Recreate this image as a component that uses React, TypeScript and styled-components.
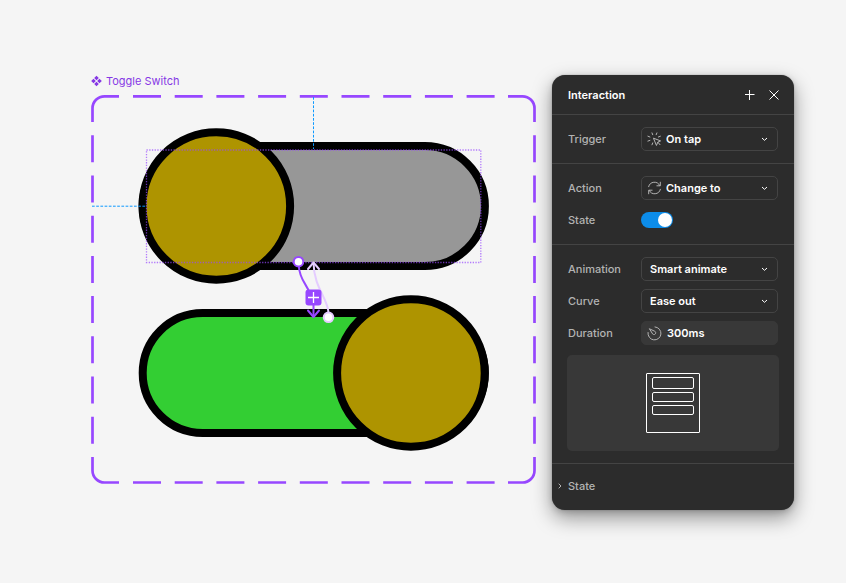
import React, { useState } from "react";
import styled, { createGlobalStyle } from "styled-components";

const PURPLE = "#9747ff";
const GUIDE = "#0d99ff";
const GOLD = "#ae9400";

const GlobalStyle = createGlobalStyle`
  *, *::before, *::after { box-sizing: border-box; }
  body {
    margin: 0;
    background: #f5f5f5;
    font-family: Inter, "Liberation Sans", sans-serif;
    font-size: 11px;
    line-height: 16px;
  }
  button, input, select { font: inherit; color: inherit; }
`;

const Page = styled.main`
  min-height: 100vh;
  display: flex;
  align-items: flex-start;
  justify-content: center;
  gap: 16px;
  padding: 73px 52px 73px 91px;
`;

const ComponentSet = styled.section`
  flex: 0 1 445px;
  min-width: 0;
`;

const SetTitle = styled.h2`
  display: flex;
  align-items: center;
  gap: 4px;
  margin: 0 0 5px;
  font-size: 11px;
  font-weight: 400;
  color: #8638e5;
`;

const Artboard = styled.svg`
  display: block;
  width: 100%;
  height: auto;
`;

const Panel = styled.aside`
  flex: 0 0 242px;
  min-width: 0;
  margin-top: 2px;
  border-radius: 13px;
  background: #2c2c2c;
  color: #ffffff;
  box-shadow: 0 8px 20px rgba(0, 0, 0, 0.4), 0 2px 6px rgba(0, 0, 0, 0.15),
    0 0 1px rgba(0, 0, 0, 0.5);
`;

const PanelHeader = styled.header`
  display: flex;
  align-items: center;
  gap: 8px;
  padding: 12px 12px 11px 16px;
`;

const PanelTitle = styled.h3`
  flex: 1;
  margin: 0;
  font-size: 11px;
  font-weight: 600;
`;

const IconButton = styled.button`
  display: grid;
  place-items: center;
  width: 16px;
  height: 16px;
  padding: 0;
  border: 0;
  background: none;
  cursor: pointer;
`;

const Section = styled.div`
  display: grid;
  grid-template-columns: minmax(0, 1fr);
  gap: 8px;
  padding: 12px 16px;
  border-top: 1px solid #444444;
`;

const Row = styled.div`
  display: grid;
  grid-template-columns: 73px minmax(0, 1fr);
  align-items: center;
  height: 24px;
`;

const Label = styled.label`
  font-weight: 500;
  color: #b3b3b3;
`;

const Field = styled.div<{ $filled?: boolean }>`
  display: flex;
  align-items: center;
  gap: 4px;
  height: 24px;
  padding: 0 8px 0 5px;
  border: 1px solid ${(p) => (p.$filled ? "#383838" : "#444444")};
  border-radius: 5px;
  background: ${(p) => (p.$filled ? "#383838" : "transparent")};

  svg { flex: none; }
`;

const Select = styled.select<{ $indent?: boolean }>`
  flex: 1;
  min-width: 0;
  height: 22px;
  padding: 0 0 0 ${(p) => (p.$indent ? "3px" : "0")};
  border: 0;
  background: transparent;
  appearance: none;
  font-weight: 600;
  outline: none;

  option { background: #2c2c2c; }
`;

const TextInput = styled.input`
  flex: 1;
  min-width: 0;
  height: 22px;
  padding: 0 0 0 1px;
  border: 0;
  background: transparent;
  font-weight: 600;
  outline: none;
`;

const Switch = styled.input`
  display: flex;
  align-items: center;
  justify-content: flex-start;
  width: 32px;
  height: 16px;
  margin: 0;
  padding: 1px;
  appearance: none;
  border-radius: 8px;
  background: #5a5a5a;
  cursor: pointer;

  &::before {
    content: "";
    width: 14px;
    height: 14px;
    border-radius: 50%;
    background: #ffffff;
  }

  &:checked {
    justify-content: flex-end;
    background: #0c8ce9;
  }
`;

const Preview = styled.div`
  display: grid;
  place-items: center;
  height: 96px;
  margin: 2px -1px 0;
  border-radius: 5px;
  background: #383838;
`;

const Phone = styled.div`
  display: flex;
  flex-direction: column;
  gap: 3px;
  width: 54px;
  height: 60px;
  padding: 3px 5px;
  border: 1px solid #ffffff;
  border-radius: 1px;
`;

const Block = styled.div<{ $tall?: boolean }>`
  height: ${(p) => (p.$tall ? "12px" : "10px")};
  border: 1px solid #ffffff;
  border-radius: 2px;
`;

const Disclosure = styled.button`
  display: flex;
  align-items: center;
  gap: 6px;
  width: 100%;
  height: 47px;
  padding: 0 6px 2px;
  border: 0;
  border-top: 1px solid #444444;
  background: none;
  color: #b3b3b3;
  font-weight: 500;
  cursor: pointer;
`;

const ComponentIcon = () => (
  <svg width="11" height="12" viewBox="0 0 11 12" fill="#8638e5" aria-hidden="true">
    <path d="M5.5 .7 7.8 3 5.5 5.3 3.2 3Z M5.5 6.7 7.8 9 5.5 11.3 3.2 9Z M2.5 3.7 4.8 6 2.5 8.3 .2 6Z M8.5 3.7 10.8 6 8.5 8.3 6.2 6Z" />
  </svg>
);

const PlusIcon = () => (
  <svg width="10" height="10" viewBox="0 0 10 10" stroke="#fff" fill="none" aria-hidden="true">
    <path d="M4.5 0v10M0 4.5h9.5" />
  </svg>
);

const CloseIcon = () => (
  <svg width="10" height="10" viewBox="0 0 10 10" stroke="#fff" fill="none" aria-hidden="true">
    <path d="M.5 .5l9 9M9.5 .5l-9 9" />
  </svg>
);

const ChevronDown = () => (
  <svg width="9" height="6" viewBox="0 0 9 6" stroke="#fff" fill="none" aria-hidden="true">
    <path d="M2 2l2.5 2.3L7 2" />
  </svg>
);

const ChevronRight = () => (
  <svg width="4" height="6" viewBox="0 0 4 6" stroke="#b3b3b3" fill="none" aria-hidden="true">
    <path d="M.7 .7 3 3 .7 5.3" />
  </svg>
);

const TapIcon = () => (
  <svg width="15" height="14" viewBox="0 0 15 14" stroke="#b3b3b3" fill="none" strokeLinecap="round" aria-hidden="true">
    <path d="M6.8 6.3 13.6 8.9 10.8 10.1 9.6 13.1Z" strokeLinejoin="round" />
    <path d="M11 10.4l2 2.3" />
    <path d="M5 .9l.7 1.8M9.9 .9l-.7 1.8M.9 4.2l2 .8M13.4 4.2l-2 .8M.9 9.1l2-.7M5 12.8l.7-1.9" />
  </svg>
);

const ChangeIcon = () => (
  <svg width="15" height="14" viewBox="0 0 15 14" stroke="#b3b3b3" fill="none" strokeLinecap="round" strokeLinejoin="round" aria-hidden="true">
    <path d="M1.6 5.7A6 6 0 0 1 12.8 4.6" />
    <path d="M13.3 1.2V4.8H9.9" />
    <path d="M13.4 8.3A6 6 0 0 1 2.2 9.4" />
    <path d="M1.7 12.8V9.2h3.4" />
  </svg>
);

const DurationIcon = () => (
  <svg width="15" height="15" viewBox="0 0 15 15" stroke="#b3b3b3" fill="none" strokeLinecap="round" strokeLinejoin="round" aria-hidden="true">
    <path d="M8 .9a6.5 6.5 0 1 1-7 5.6" />
    <path d="M2.7 2.9 7.4 5.1A1.8 1.8 0 1 1 5.2 7.4Z" />
  </svg>
);

interface DropDownProps {
  id: string;
  label: string;
  value: string;
  icon?: React.ReactNode;
}

const DropDown = ({ id, label, value, icon }: DropDownProps) => (
  <Row>
    <Label htmlFor={id}>{label}</Label>
    <Field>
      {icon}
      <Select id={id} $indent={!icon} defaultValue={value}>
        <option>{value}</option>
      </Select>
      <ChevronDown />
    </Field>
  </Row>
);

const ToggleArtwork = () => (
  <Artboard viewBox="91 94 445 391" role="img" aria-label="Toggle switch variants">
    <g fill="none" stroke={PURPLE} strokeWidth="2.7">
      <path d="M92.5 122V108.3a12 12 0 0 1 12-12H119" />
      <path d="M508 96.3H522.5a12 12 0 0 1 12 12V122" />
      <path d="M92.5 457V470.5a12 12 0 0 0 12 12H119" />
      <path d="M508 482.5H522.5a12 12 0 0 0 12-12V457" />
      <path d="M133 96.3H496M133 482.5H496" strokeDasharray="28 13.7" />
      <path d="M92.5 135.3V445M534.5 135.3V445" strokeDasharray="27 13.2" />
    </g>

    <g stroke="#000" strokeWidth="8">
      <rect x="142.7" y="146" width="342.2" height="120" rx="60" fill="#979797" />
      <circle cx="216.3" cy="206" r="73.8" fill={GOLD} />
      <rect x="142.7" y="313" width="342.2" height="120" rx="60" fill="#33ce33" />
      <circle cx="410.9" cy="373" r="73.8" fill={GOLD} />
    </g>

    <g fill="none">
      <rect x="146.5" y="150" width="334.3" height="112.5" stroke={PURPLE} strokeOpacity=".7" strokeWidth="1.3" strokeDasharray="1.3 1.4" />
      <path d="M92 206.2H146M313.5 97V149" stroke={GUIDE} strokeDasharray="2.7 1.5" />
    </g>

    <g fill="none" stroke="#e4ccff" strokeWidth="2" strokeLinecap="round" strokeLinejoin="round">
      <path d="M328.5 313C328 298 314 288 313.5 263" />
      <path d="M308 269l5.5-6.5 5.5 6.5" />
      <circle cx="328.5" cy="317.3" r="4.8" fill="#fff" />
    </g>

    <g fill="none" stroke={PURPLE} strokeWidth="2" strokeLinecap="round" strokeLinejoin="round">
      <path d="M298.8 266C299.5 280 307 284 310 294M313.5 304V316" />
      <path d="M308 310.5l5.5 6.5 5.5-6.5" />
      <circle cx="298.5" cy="261.7" r="4.8" fill="#fff" />
    </g>
    <rect x="305.5" y="289.5" width="16" height="16" rx="3" fill={PURPLE} />
    <path d="M313.5 292v11M308 297.5h11" stroke="#fff" strokeWidth="1.3" />
  </Artboard>
);

export default function App() {
  const [changesState, setChangesState] = useState(true);

  return (
    <>
      <GlobalStyle />
      <Page>
        <ComponentSet>
          <SetTitle>
            <ComponentIcon />
            Toggle Switch
          </SetTitle>
          <ToggleArtwork />
        </ComponentSet>

        <Panel>
          <PanelHeader>
            <PanelTitle>Interaction</PanelTitle>
            <IconButton type="button" aria-label="Add">
              <PlusIcon />
            </IconButton>
            <IconButton type="button" aria-label="Close">
              <CloseIcon />
            </IconButton>
          </PanelHeader>

          <Section>
            <DropDown id="trigger" label="Trigger" value="On tap" icon={<TapIcon />} />
          </Section>

          <Section>
            <DropDown id="action" label="Action" value="Change to" icon={<ChangeIcon />} />
            <Row>
              <Label htmlFor="state">State</Label>
              <Switch
                id="state"
                type="checkbox"
                role="switch"
                checked={changesState}
                onChange={(e) => setChangesState(e.target.checked)}
              />
            </Row>
          </Section>

          <Section>
            <DropDown id="animation" label="Animation" value="Smart animate" />
            <DropDown id="curve" label="Curve" value="Ease out" />
            <Row>
              <Label htmlFor="duration">Duration</Label>
              <Field $filled>
                <DurationIcon />
                <TextInput id="duration" defaultValue="300ms" />
              </Field>
            </Row>
            <Preview>
              <Phone>
                <Block $tall />
                <Block />
                <Block />
              </Phone>
            </Preview>
          </Section>

          <Disclosure type="button" aria-expanded="false">
            <ChevronRight />
            State
          </Disclosure>
        </Panel>
      </Page>
    </>
  );
}
